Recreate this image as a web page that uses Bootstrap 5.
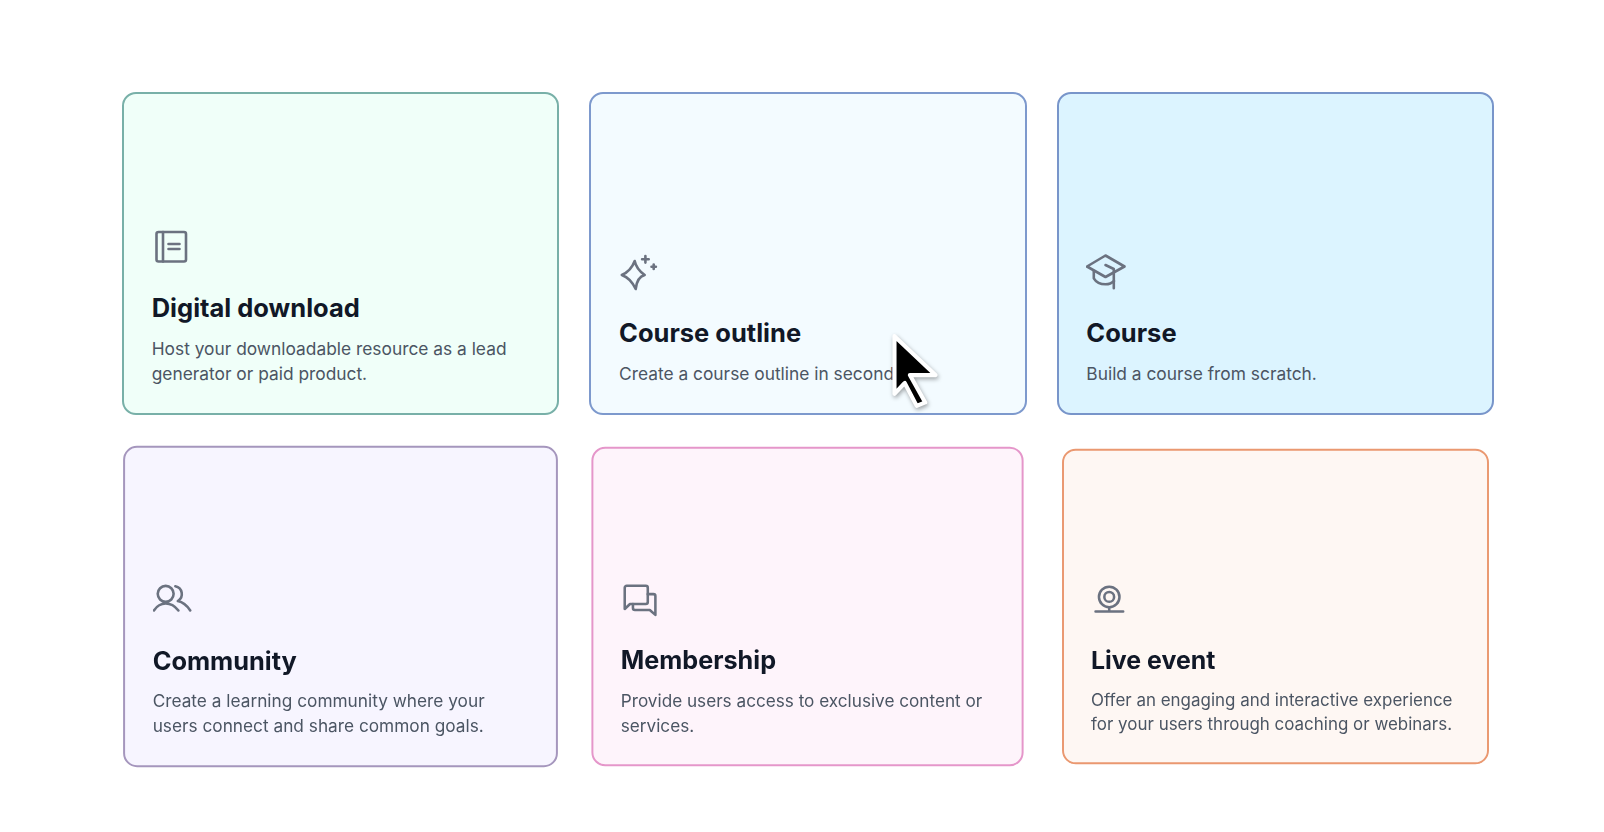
<!DOCTYPE html>
<html lang="en">
<head>
  <meta charset="UTF-8">
  <title>Create a product</title>
  <link href="https://cdn.jsdelivr.net/npm/bootstrap@5.3.2/dist/css/bootstrap.min.css" rel="stylesheet">
  <style>
    body { background-color: #fff; font-family: "Inter", "Liberation Sans", sans-serif; overflow: hidden; }
    .page-wrap { padding: 92px 110px 0 122px; position: relative; }
    .tile-row { --bs-gutter-x: 30px; --bs-gutter-y: 30px; }
    .tile {
      height: 323px;
      padding: 0 28px 27.5px 27.7px;
      border-width: 2px;
      border-radius: 14px;
    }
    .tile-icon { width: 40px; height: 40px; margin-bottom: 23px; fill: none; stroke: #6b7280; stroke-width: 2.6; stroke-linecap: round; stroke-linejoin: round; }
    .tile-title { font-family: "Inter", sans-serif; font-weight: 700; font-size: 25.5px; line-height: 36px; color: #111827; margin-bottom: 9.5px; }
    .tile-text { font-size: 17.35px; line-height: 25px; color: #4b5563; margin: 0; }
    .tile-green { background-color: #f0fff9; border-color: #78b0a8; }
    .tile-sky { background-color: #f3fbff; border-color: #7d99cd; }
    .tile-blue { background-color: #dcf4ff; border-color: #7895ca; }
    .tile-violet { background-color: #f7f5ff; border-color: #a596bd; transform: scale(.995); }
    .tile-pink { background-color: #fef4fb; border-color: #e596ca; transform: scale(.989); }
    .tile-peach { background-color: #fef7f3; border-color: #ea9870; transform: scale(.977); }
    .pointer-arrow { position: absolute; left: 886.5px; top: 329px; width: 58px; height: 84px; filter: drop-shadow(1px 2px 2px rgba(0,0,0,.35)); }
  </style>
</head>
<body>

<div class="page-wrap">
  <div class="row row-cols-3 tile-row">
    <div class="col">
      <div class="card tile tile-green justify-content-end">
        <svg class="tile-icon" viewBox="0 0 40 40"><rect x="4.5" y="5" width="29.5" height="29.5" rx="2"/><path d="M11 5v29.5M16.500 17h11M16.500 22h11"/></svg>
        <h5 class="tile-title">Digital download</h5>
        <p class="tile-text">Host your downloadable resource as a lead generator or paid product.</p>
      </div>
    </div>
    <div class="col">
      <div class="card tile tile-sky justify-content-end">
        <svg class="tile-icon" viewBox="0 0 40 40"><path d="M15.700 9Q17.300 17.100 25.700 23Q18 25 16.700 37Q11.500 26 2.800 23Q12 19 15.700 9Z"/><path d="M26.400 4v6.600M23.100 7.300h6.600M34.700 12.500v4.400M32.500 14.700h4.400"/></svg>
        <h5 class="tile-title">Course outline</h5>
        <p class="tile-text">Create a course outline in seconds.</p>
      </div>
    </div>
    <div class="col">
      <div class="card tile tile-blue justify-content-end">
        <svg class="tile-icon" viewBox="0 0 40 40"><path d="M1 14.500L19.500 3.500L38.500 14.500L19.500 25Z"/><path d="M7.800 19v7.300C10 30 15 32.300 19.500 32.300C23 32.300 26 31 28 29"/><path d="M19.500 13L27.800 17V36.300"/></svg>
        <h5 class="tile-title">Course</h5>
        <p class="tile-text">Build a course from scratch.</p>
      </div>
    </div>
    <div class="col">
      <div class="card tile tile-violet justify-content-end">
        <svg class="tile-icon" viewBox="0 0 40 40"><circle cx="12.800" cy="13.800" r="8"/><path d="M1 30.500C4 26 8 23.500 12.800 23.500C17.500 23.500 22 26 25.600 30.500"/><path d="M22.500 6.200A8 8 0 0 1 25 21C30 22 34.500 26 37.500 30.500"/></svg>
        <h5 class="tile-title">Community</h5>
        <p class="tile-text">Create a learning community where your users connect and share common goals.</p>
      </div>
    </div>
    <div class="col">
      <div class="card tile tile-pink justify-content-end">
        <svg class="tile-icon" viewBox="0 0 40 40"><path d="M3.700 29V7.500a2 2 0 0 1 2-2H25a2 2 0 0 1 2 2V22a2 2 0 0 1-2 2H9Z"/><path d="M27 14h5.700a2 2 0 0 1 2 2V35L29 30H14a2 2 0 0 1-2-2V24"/></svg>
        <h5 class="tile-title">Membership</h5>
        <p class="tile-text">Provide users access to exclusive content or services.</p>
      </div>
    </div>
    <div class="col">
      <div class="card tile tile-peach justify-content-end">
        <svg class="tile-icon" viewBox="0 0 40 40"><circle cx="18.300" cy="16.700" r="10.500"/><circle cx="18.300" cy="16.700" r="5"/><path d="M18.300 27.200v4.500M4.300 31.700h28.300"/></svg>
        <h5 class="tile-title">Live event</h5>
        <p class="tile-text">Offer an engaging and interactive experience for your users through coaching or webinars.</p>
      </div>
    </div>
  </div>
  <svg class="pointer-arrow" viewBox="0 0 56 82"><path d="M7 7L47 45H22L37 71.700L28.700 75L17 52.700L7 63.300Z" fill="#000" stroke="#fff" stroke-width="4" stroke-linejoin="round"/></svg>
</div>

<script src="https://cdn.jsdelivr.net/npm/bootstrap@5.3.2/dist/js/bootstrap.bundle.min.js"></script>
</body>
</html>
